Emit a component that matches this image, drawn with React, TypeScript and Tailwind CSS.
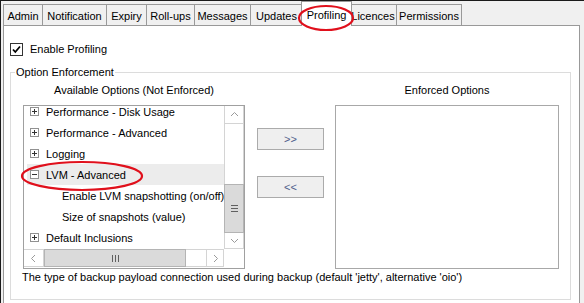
import React from "react";

const tabs = [
  { label: "Admin", w: "w-[40px]" },
  { label: "Notification", w: "w-[64px]" },
  { label: "Expiry", w: "w-[40px]" },
  { label: "Roll-ups", w: "w-[48px]" },
  { label: "Messages", w: "w-[56px]" },
  { label: "Updates", w: "w-[52px]" },
  { label: "Profiling", w: "w-[51px]", selected: true },
  { label: "Licences", w: "w-[47px]" },
  { label: "Permissions", w: "w-[65px]" },
];

type Row = { label: string; kind: "plus" | "minus" | "child"; active?: boolean };

const rows: Row[] = [
  { label: "Performance - Disk Usage", kind: "plus" },
  { label: "Performance - Advanced", kind: "plus" },
  { label: "Logging", kind: "plus" },
  { label: "LVM - Advanced", kind: "minus", active: true },
  { label: "Enable LVM snapshotting (on/off)", kind: "child" },
  { label: "Size of snapshots (value)", kind: "child" },
  { label: "Default Inclusions", kind: "plus" },
];

function Expander({ open }: { open: boolean }) {
  return (
    <svg width="9" height="9" viewBox="0 0 9 9" className="shrink-0">
      <rect x="0.5" y="0.5" width="8" height="8" fill="#fff" stroke="#919191" />
      <path d="M2 4.5h5" stroke="#333" />
      {!open && <path d="M4.5 2v5" stroke="#333" />}
    </svg>
  );
}

function Chevron({ dir }: { dir: "up" | "down" | "left" | "right" }) {
  const d = {
    up: "M1 5l3.5-3.5L8 5",
    down: "M1 2l3.5 3.5L8 2",
    left: "M5 1L1.5 4.5L5 8",
    right: "M2 1l3.5 3.5L2 8",
  }[dir];
  const vertical = dir === "up" || dir === "down";
  return (
    <svg
      width={vertical ? 9 : 7}
      height={vertical ? 7 : 9}
      viewBox={vertical ? "0 0 9 7" : "0 0 7 9"}
    >
      <path d={d} fill="none" stroke="#9a9a9a" strokeWidth="1" />
    </svg>
  );
}

function TreeList() {
  return (
    <div className="w-[222px] h-[164px] border border-[#a0a0a0] bg-white flex flex-col">
      <div className="flex flex-1 min-h-0">
        {/* rows */}
        <div className="flex-1 overflow-hidden">
          <div className="-mt-[5px]">
            {rows.map((r) => (
              <div
                key={r.label}
                className={`h-[21px] ml-[3px] pt-[2px] flex items-center whitespace-nowrap ${
                  r.active ? "bg-[#ececec]" : ""
                }`}
              >
                {r.kind === "child" ? (
                  <span className="pl-[35px]">{r.label}</span>
                ) : (
                  <>
                    <span className="pl-[3px] -mt-[2px] flex items-center">
                      <Expander open={r.kind === "minus"} />
                    </span>
                    <span className="pl-[7px]">{r.label}</span>
                  </>
                )}
              </div>
            ))}
          </div>
        </div>
        {/* vertical scrollbar */}
        <div className="w-[20px] flex flex-col border-l border-r border-[#d4d4d4]">
          <div className="h-[18px] flex items-center justify-center border-b border-[#d4d4d4]">
            <Chevron dir="up" />
          </div>
          <div className="flex-1 flex flex-col">
            <div className="h-[60px]" />
            <div className="h-[49px] -mx-px bg-[#dadada] border border-[#b4b4b4] flex flex-col items-center justify-center gap-[2px]">
              <div className="w-[7px] h-px bg-[#606060]" />
              <div className="w-[7px] h-px bg-[#606060]" />
              <div className="w-[7px] h-px bg-[#606060]" />
            </div>
          </div>
          <div className="h-[16px] flex items-center justify-center border-b border-[#d4d4d4]">
            <Chevron dir="down" />
          </div>
        </div>
      </div>
      {/* horizontal scrollbar */}
      <div className="h-[19px] flex pb-px">
        <div className="flex flex-1 border border-l-0 border-[#d4d4d4]">
          <div className="w-[20px] flex items-center justify-center border-r border-[#d4d4d4]">
            <Chevron dir="left" />
          </div>
          <div className="w-[142px] -my-px bg-[#dadada] border border-[#b4b4b4] flex items-center justify-center gap-[2px]">
            <div className="w-px h-[7px] bg-[#606060]" />
            <div className="w-px h-[7px] bg-[#606060]" />
            <div className="w-px h-[7px] bg-[#606060]" />
          </div>
          <div className="flex-1" />
          <div className="w-[17px] flex items-center justify-center border-l border-[#d4d4d4]">
            <Chevron dir="right" />
          </div>
        </div>
        <div className="w-[20px]" />
      </div>
    </div>
  );
}

function MoveButton({ label }: { label: string }) {
  return (
    <button className="w-[67px] h-[22px] bg-[#efefef] border border-[#ababab] flex items-center justify-center text-[11px] text-[#50608c]">
      {label}
    </button>
  );
}

export default function App() {
  return (
    <div className="relative w-[584px] h-[303px] overflow-hidden bg-[#f0f0f0] border-t border-l border-[#1a1a1a] font-['Liberation_Sans',Arial,sans-serif] text-[11px] leading-[13px] text-black">
      {/* Tab strip */}
      <div className="flex items-start h-[24px] pl-[2px] pt-[3px]">
        {tabs.map((t, i) =>
          t.selected ? (
            <div
              key={t.label}
              className={`${t.w} relative z-10 -mx-[2px] -mt-[3px] h-[25px] bg-white border border-b-0 border-[#999] flex items-center justify-center pt-[3px]`}
            >
              {t.label}
            </div>
          ) : (
            <div
              key={t.label}
              className={`${t.w} h-[21px] bg-[#f0f0f0] border-t border-r border-[#999] ${
                i === 0 ? "border-l" : ""
              } flex items-center justify-center pt-[2px]`}
            >
              {t.label}
            </div>
          ),
        )}
      </div>

      {/* Tab page */}
      <div className="ml-[2px] w-[577px] h-[285px] bg-white border border-[#999] pt-[17px] pl-[6px]">
        <label className="flex items-center h-[13px]">
          <span className="w-[13px] h-[13px] border border-[#333] bg-white flex items-center justify-center">
            <svg width="9" height="9" viewBox="0 0 9 9">
              <path d="M1 4.5l2.3 2.5L8 1.5" fill="none" stroke="#000" strokeWidth="1.8" />
            </svg>
          </span>
          <span className="ml-[7px]">Enable Profiling</span>
        </label>

        <fieldset className="mt-[10px] w-[561px] border border-[#dcdcdc] pb-[15px]">
          <legend className="ml-[4px] px-px">Option Enforcement</legend>

          <div className="pt-[5px] pl-[12px] flex">
            <div className="w-[222px] flex flex-col">
              <div className="text-center h-[13px]">Available Options (Not Enforced)</div>
              <div className="mt-[8px]">
                <TreeList />
              </div>
            </div>

            <div className="w-[90px] pl-[12px] pt-[44px] flex flex-col gap-[26px]">
              <MoveButton label=">>" />
              <MoveButton label="<<" />
            </div>

            <div className="w-[224px] flex flex-col">
              <div className="text-center h-[13px]">Enforced Options</div>
              <div className="mt-[8px] h-[164px] border border-[#a8a8a8] bg-white" />
            </div>
          </div>

          <p className="mt-[2px] pl-[11px] h-[13px] whitespace-nowrap">
            The type of backup payload connection used during backup (default 'jetty', alternative 'oio')
          </p>
        </fieldset>
      </div>

      {/* Annotation ellipses */}
      <svg className="absolute left-0 top-0 z-20 pointer-events-none" width="584" height="303">
        <ellipse cx="325" cy="17" rx="27" ry="12" fill="none" stroke="#e0101c" strokeWidth="2.2" />
        <ellipse cx="81" cy="175" rx="60" ry="14" fill="none" stroke="#e0101c" strokeWidth="2.2" />
      </svg>
    </div>
  );
}
